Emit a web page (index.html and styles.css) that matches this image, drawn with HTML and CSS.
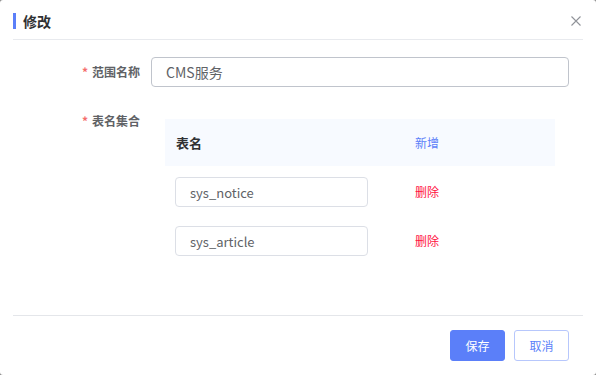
FILE: index.html
```html
<!DOCTYPE html>
<html lang="zh-CN">
<head>
    <meta charset="UTF-8">
    <meta name="viewport" content="width=device-width, initial-scale=1.0">
    <title>修改</title>
    <link rel="stylesheet" href="styles.css">
</head>
<body>
    <div class="dialog">
        <div class="dialog-header">
            <span class="dialog-title">修改</span>
            <span class="close-btn">
                <svg width="10" height="10" viewBox="0 0 10 10"><path d="M0.5 0.5 L9.5 9.5 M9.5 0.5 L0.5 9.5" stroke="#909399" stroke-width="1.1" fill="none"/></svg>
            </span>
        </div>

        <div class="dialog-body">
            <div class="form-item">
                <label class="form-label"><span class="star">*</span>范围名称</label>
                <div class="form-content">
                    <input class="input input-main" type="text" value="CMS服务">
                </div>
            </div>

            <div class="form-item">
                <label class="form-label"><span class="star">*</span>表名集合</label>
                <div class="form-content">
                    <div class="table">
                        <div class="table-head">
                            <div class="col-name">表名</div>
                            <div class="col-op"><a class="link-add">新增</a></div>
                        </div>
                        <div class="table-row">
                            <div class="col-name"><input class="input input-small" type="text" value="sys_notice"></div>
                            <div class="col-op"><a class="link-del">删除</a></div>
                        </div>
                        <div class="table-row">
                            <div class="col-name"><input class="input input-small" type="text" value="sys_article"></div>
                            <div class="col-op"><a class="link-del">删除</a></div>
                        </div>
                    </div>
                </div>
            </div>
        </div>

        <div class="dialog-footer">
            <button class="btn btn-primary">保存</button>
            <button class="btn btn-plain">取消</button>
        </div>
    </div>
</body>
</html>
```

FILE: styles.css
```css
html {
    background-color: #8a8a8a;
}
body {
    margin: 0;
    font-family: "Noto Sans CJK SC", "Noto Sans", sans-serif;
}
.dialog {
    width: 596px;
    height: 375px;
    box-sizing: border-box;
    padding: 0 13px;
    background-color: #fff;
    border-radius: 3px;
    display: flex;
    flex-direction: column;
}
.dialog-header {
    height: 40px;
    border-bottom: 1px solid #e8eaee;
    display: flex;
    align-items: center;
    justify-content: space-between;
    padding-top: 2px;
    box-sizing: border-box;
}
.dialog-title {
    border-left: 3px solid #5b7ff9;
    padding-left: 7px;
    font-size: 14px;
    line-height: 16px;
    font-weight: bold;
    color: #303133;
}
.close-btn {
    display: flex;
    margin-right: 2px;
}
.dialog-body {
    flex: 1;
    padding-top: 17px;
}
.form-item {
    display: flex;
    margin-bottom: 19px;
}
.form-label {
    width: 138px;
    flex-shrink: 0;
    box-sizing: border-box;
    padding-right: 11px;
    text-align: right;
    font-size: 12px;
    font-weight: bold;
    line-height: 30px;
    color: #606266;
}
.star {
    color: #f56c6c;
    margin-right: 4px;
}
.form-content {
    flex: 1;
    padding-right: 14px;
}
.input {
    box-sizing: border-box;
    height: 30px;
    border: 1px solid #dcdfe6;
    border-radius: 4px;
    padding: 0 14px;
    font-family: inherit;
    font-size: 14px;
    color: #606266;
    outline: none;
}
.input-main {
    width: 100%;
    border-color: #c0c4cc;
}
.input-small {
    width: 193px;
    font-size: 13px;
}
.table {
    margin: 13px 0 0 14px;
    width: 390px;
}
.table-head,
.table-row {
    display: flex;
}
.table-head {
    height: 47px;
    align-items: center;
    background-color: #f7faff;
    font-size: 13px;
    font-weight: bold;
    color: #303133;
}
.table-head .col-name {
    padding-left: 11px;
}
.table-row {
    height: 49px;
    padding-top: 11px;
    box-sizing: border-box;
}
.col-name {
    width: 240px;
    box-sizing: border-box;
    padding-left: 10px;
}
.col-op {
    padding-left: 10px;
    font-size: 12px;
    font-weight: normal;
}
.table-row .col-op {
    line-height: 30px;
}
.link-add {
    color: #5b7ff9;
}
.link-del {
    color: #ff1241;
}
.dialog-footer {
    box-sizing: border-box;
    border-top: 1px solid #e4e6ea;
    height: 60px;
    display: flex;
    justify-content: flex-end;
    align-items: flex-start;
    padding: 14px 14px 0 0;
    gap: 9px;
}
.btn {
    height: 31px;
    width: 55px;
    border-radius: 3px;
    font-family: inherit;
    font-size: 12px;
    cursor: pointer;
}
.btn-primary {
    background-color: #5b7ff9;
    border: 1px solid #5b7ff9;
    color: #fff;
}
.btn-plain {
    background-color: #fff;
    border: 1px solid #b7c7fc;
    color: #5b7ff9;
}
```
